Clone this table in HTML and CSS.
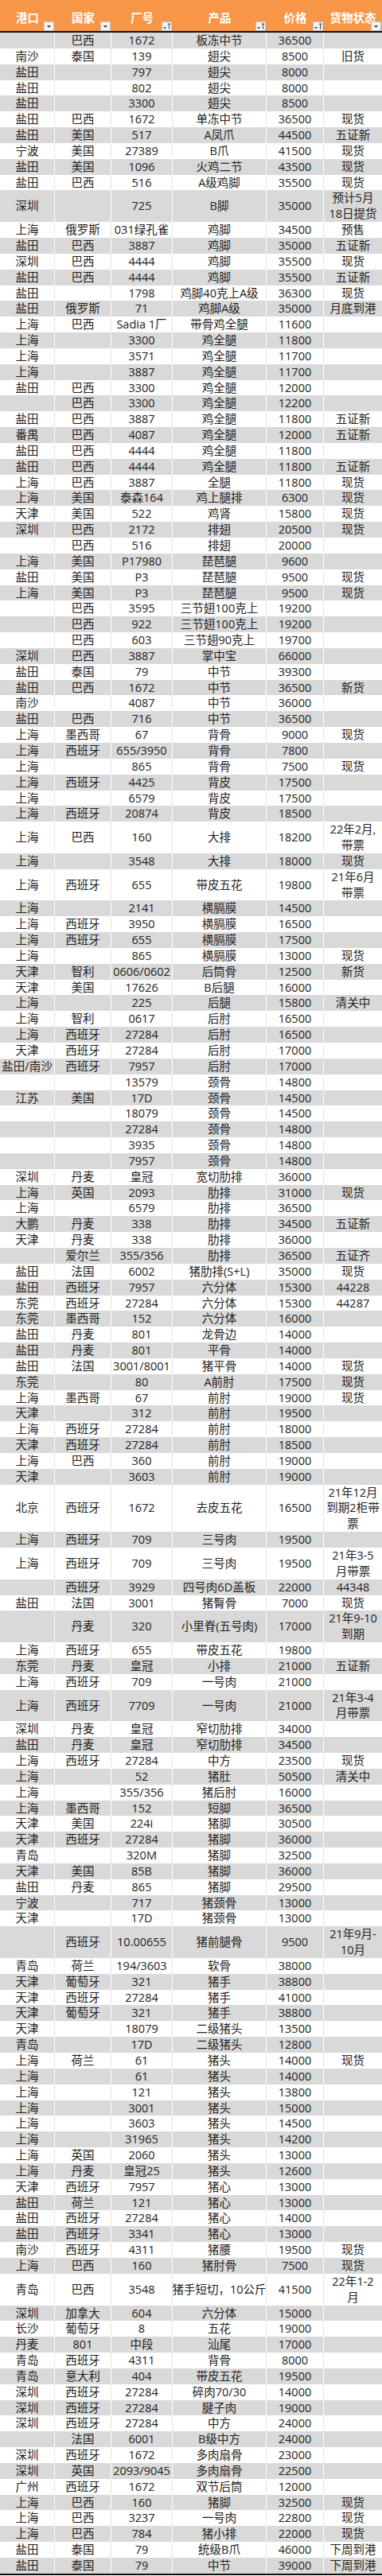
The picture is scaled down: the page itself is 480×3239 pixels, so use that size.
FILE: index.html
```html
<!DOCTYPE html>
<html lang="zh-CN">
<head>
<meta charset="utf-8">
<title>货物报价</title>
<link rel="stylesheet" href="styles.css">
</head>
<body>
<div class="sheet">
  <div class="hd">
    <div>港口<svg class="flt" viewBox="0 0 13 12"><rect x="0.5" y="0.5" width="12" height="11" fill="#f3f3f3" stroke="#c4c4c4"/><path d="M4 5h5l-2.5 3z" fill="#444"/></svg></div>
    <div>国家<svg class="flt" viewBox="0 0 13 12"><rect x="0.5" y="0.5" width="12" height="11" fill="#f3f3f3" stroke="#c4c4c4"/><path d="M4 5h5l-2.5 3z" fill="#444"/></svg></div>
    <div>厂号<svg class="flt" viewBox="0 0 13 12"><rect x="0.5" y="0.5" width="12" height="11" fill="#f3f3f3" stroke="#c4c4c4"/><path d="M2 7h4l-2 2.5z" fill="#444"/><path d="M9.5 2.2v7.6M8 3.8l1.5-1.6 1.5 1.6" stroke="#444" fill="none"/></svg></div>
    <div>产品<svg class="flt" viewBox="0 0 13 12"><rect x="0.5" y="0.5" width="12" height="11" fill="#f3f3f3" stroke="#c4c4c4"/><path d="M2 7h4l-2 2.5z" fill="#444"/><path d="M9.5 2.2v7.6M8 3.8l1.5-1.6 1.5 1.6" stroke="#444" fill="none"/></svg></div>
    <div>价格<svg class="flt" viewBox="0 0 13 12"><rect x="0.5" y="0.5" width="12" height="11" fill="#f3f3f3" stroke="#c4c4c4"/><path d="M2 7h4l-2 2.5z" fill="#444"/><path d="M9.5 2.2v7.6M8 3.8l1.5-1.6 1.5 1.6" stroke="#444" fill="none"/></svg></div>
    <div>货物状态<svg class="flt" viewBox="0 0 13 12"><rect x="0.5" y="0.5" width="12" height="11" fill="#f3f3f3" stroke="#c4c4c4"/><path d="M4 5h5l-2.5 3z" fill="#444"/></svg></div>
  </div>
  <div class="body">
<div class="r"><div></div><div>巴西</div><div>1672</div><div>板冻中节</div><div>36500</div><div></div></div>
<div class="r"><div>南沙</div><div>泰国</div><div>139</div><div>翅尖</div><div>8500</div><div>旧货</div></div>
<div class="r"><div>盐田</div><div></div><div>797</div><div>翅尖</div><div>8000</div><div></div></div>
<div class="r"><div>盐田</div><div></div><div>802</div><div>翅尖</div><div>8000</div><div></div></div>
<div class="r"><div>盐田</div><div></div><div>3300</div><div>翅尖</div><div>8500</div><div></div></div>
<div class="r"><div>盐田</div><div>巴西</div><div>1672</div><div>单冻中节</div><div>36500</div><div>现货</div></div>
<div class="r"><div>盐田</div><div>美国</div><div>517</div><div>A凤爪</div><div>44500</div><div>五证新</div></div>
<div class="r"><div>宁波</div><div>美国</div><div>27389</div><div>B爪</div><div>41500</div><div>现货</div></div>
<div class="r"><div>盐田</div><div>美国</div><div>1096</div><div>火鸡二节</div><div>43500</div><div>现货</div></div>
<div class="r"><div>盐田</div><div>巴西</div><div>516</div><div>A级鸡脚</div><div>35500</div><div>现货</div></div>
<div class="r"><div>深圳</div><div></div><div>725</div><div>B脚</div><div>35000</div><div><p class="ml">预计5月<br>18日提货</p></div></div>
<div class="r"><div>上海</div><div>俄罗斯</div><div>031绿孔雀</div><div>鸡脚</div><div>34500</div><div>预售</div></div>
<div class="r"><div>盐田</div><div>巴西</div><div>3887</div><div>鸡脚</div><div>35000</div><div>五证新</div></div>
<div class="r"><div>深圳</div><div>巴西</div><div>4444</div><div>鸡脚</div><div>35500</div><div>现货</div></div>
<div class="r"><div>盐田</div><div>巴西</div><div>4444</div><div>鸡脚</div><div>35500</div><div>五证新</div></div>
<div class="r"><div>盐田</div><div></div><div>1798</div><div>鸡脚40克上A级</div><div>36300</div><div>现货</div></div>
<div class="r"><div>盐田</div><div>俄罗斯</div><div>71</div><div>鸡脚A级</div><div>35000</div><div>月底到港</div></div>
<div class="r"><div>上海</div><div>巴西</div><div>Sadia 1厂</div><div>带骨鸡全腿</div><div>11600</div><div></div></div>
<div class="r"><div>上海</div><div></div><div>3300</div><div>鸡全腿</div><div>11800</div><div></div></div>
<div class="r"><div>上海</div><div></div><div>3571</div><div>鸡全腿</div><div>11700</div><div></div></div>
<div class="r"><div>上海</div><div></div><div>3887</div><div>鸡全腿</div><div>11700</div><div></div></div>
<div class="r"><div>盐田</div><div>巴西</div><div>3300</div><div>鸡全腿</div><div>12000</div><div></div></div>
<div class="r"><div></div><div>巴西</div><div>3300</div><div>鸡全腿</div><div>12200</div><div></div></div>
<div class="r"><div>盐田</div><div>巴西</div><div>3887</div><div>鸡全腿</div><div>11800</div><div>五证新</div></div>
<div class="r"><div>番禺</div><div>巴西</div><div>4087</div><div>鸡全腿</div><div>12000</div><div>五证新</div></div>
<div class="r"><div>盐田</div><div>巴西</div><div>4444</div><div>鸡全腿</div><div>11800</div><div></div></div>
<div class="r"><div>盐田</div><div>巴西</div><div>4444</div><div>鸡全腿</div><div>11800</div><div>五证新</div></div>
<div class="r"><div>上海</div><div>巴西</div><div>3887</div><div>全腿</div><div>11800</div><div>现货</div></div>
<div class="r"><div>上海</div><div>美国</div><div>泰森164</div><div>鸡上腿排</div><div>6300</div><div>现货</div></div>
<div class="r"><div>天津</div><div>美国</div><div>522</div><div>鸡肾</div><div>15800</div><div>现货</div></div>
<div class="r"><div>深圳</div><div>巴西</div><div>2172</div><div>排翅</div><div>20500</div><div>现货</div></div>
<div class="r"><div></div><div>巴西</div><div>516</div><div>排翅</div><div>20000</div><div></div></div>
<div class="r"><div>上海</div><div>美国</div><div>P17980</div><div>琵琶腿</div><div>9600</div><div></div></div>
<div class="r"><div>盐田</div><div>美国</div><div>P3</div><div>琵琶腿</div><div>9500</div><div>现货</div></div>
<div class="r"><div>上海</div><div>美国</div><div>P3</div><div>琵琶腿</div><div>9500</div><div>现货</div></div>
<div class="r"><div></div><div>巴西</div><div>3595</div><div>三节翅100克上</div><div>19200</div><div></div></div>
<div class="r"><div></div><div>巴西</div><div>922</div><div>三节翅100克上</div><div>19200</div><div></div></div>
<div class="r"><div></div><div>巴西</div><div>603</div><div>三节翅90克上</div><div>19700</div><div></div></div>
<div class="r"><div>深圳</div><div>巴西</div><div>3887</div><div>掌中宝</div><div>66000</div><div></div></div>
<div class="r"><div>盐田</div><div>泰国</div><div>79</div><div>中节</div><div>39300</div><div></div></div>
<div class="r"><div>盐田</div><div>巴西</div><div>1672</div><div>中节</div><div>36500</div><div>新货</div></div>
<div class="r"><div>南沙</div><div></div><div>4087</div><div>中节</div><div>36000</div><div></div></div>
<div class="r"><div>盐田</div><div>巴西</div><div>716</div><div>中节</div><div>36500</div><div></div></div>
<div class="r"><div>上海</div><div>墨西哥</div><div>67</div><div>背骨</div><div>9000</div><div>现货</div></div>
<div class="r"><div>上海</div><div>西班牙</div><div>655/3950</div><div>背骨</div><div>7800</div><div></div></div>
<div class="r"><div>上海</div><div></div><div>865</div><div>背骨</div><div>7500</div><div>现货</div></div>
<div class="r"><div>上海</div><div>西班牙</div><div>4425</div><div>背皮</div><div>17500</div><div></div></div>
<div class="r"><div>上海</div><div></div><div>6579</div><div>背皮</div><div>17500</div><div></div></div>
<div class="r"><div>上海</div><div>西班牙</div><div>20874</div><div>背皮</div><div>18500</div><div></div></div>
<div class="r"><div>上海</div><div>巴西</div><div>160</div><div>大排</div><div>18200</div><div><p class="ml">22年2月,<br>带票</p></div></div>
<div class="r"><div>上海</div><div></div><div>3548</div><div>大排</div><div>18000</div><div>现货</div></div>
<div class="r"><div>上海</div><div>西班牙</div><div>655</div><div>带皮五花</div><div>19800</div><div><p class="ml">21年6月<br>带票</p></div></div>
<div class="r"><div>上海</div><div></div><div>2141</div><div>横膈膜</div><div>14500</div><div></div></div>
<div class="r"><div>上海</div><div>西班牙</div><div>3950</div><div>横膈膜</div><div>16500</div><div></div></div>
<div class="r"><div>上海</div><div>西班牙</div><div>655</div><div>横膈膜</div><div>17500</div><div></div></div>
<div class="r"><div>上海</div><div></div><div>865</div><div>横膈膜</div><div>13000</div><div>现货</div></div>
<div class="r"><div>天津</div><div>智利</div><div>0606/0602</div><div>后筒骨</div><div>12500</div><div>新货</div></div>
<div class="r"><div>天津</div><div>美国</div><div>17626</div><div>B后腿</div><div>16000</div><div></div></div>
<div class="r"><div>上海</div><div></div><div>225</div><div>后腿</div><div>15800</div><div>清关中</div></div>
<div class="r"><div>上海</div><div>智利</div><div>0617</div><div>后肘</div><div>16500</div><div></div></div>
<div class="r"><div>上海</div><div>西班牙</div><div>27284</div><div>后肘</div><div>16500</div><div></div></div>
<div class="r"><div>天津</div><div>西班牙</div><div>27284</div><div>后肘</div><div>17000</div><div></div></div>
<div class="r"><div>盐田/南沙</div><div>西班牙</div><div>7957</div><div>后肘</div><div>17000</div><div></div></div>
<div class="r"><div></div><div></div><div>13579</div><div>颈骨</div><div>14800</div><div></div></div>
<div class="r"><div>江苏</div><div>美国</div><div>17D</div><div>颈骨</div><div>14500</div><div></div></div>
<div class="r"><div></div><div></div><div>18079</div><div>颈骨</div><div>14500</div><div></div></div>
<div class="r"><div></div><div></div><div>27284</div><div>颈骨</div><div>14800</div><div></div></div>
<div class="r"><div></div><div></div><div>3935</div><div>颈骨</div><div>14800</div><div></div></div>
<div class="r"><div></div><div></div><div>7957</div><div>颈骨</div><div>14800</div><div></div></div>
<div class="r"><div>深圳</div><div>丹麦</div><div>皇冠</div><div>宽切肋排</div><div>36000</div><div></div></div>
<div class="r"><div>上海</div><div>英国</div><div>2093</div><div>肋排</div><div>31000</div><div>现货</div></div>
<div class="r"><div>上海</div><div></div><div>6579</div><div>肋排</div><div>36500</div><div></div></div>
<div class="r"><div>大鹏</div><div>丹麦</div><div>338</div><div>肋排</div><div>34500</div><div>五证新</div></div>
<div class="r"><div>天津</div><div>丹麦</div><div>338</div><div>肋排</div><div>36000</div><div></div></div>
<div class="r"><div></div><div>爱尔兰</div><div>355/356</div><div>肋排</div><div>36500</div><div>五证齐</div></div>
<div class="r"><div>盐田</div><div>法国</div><div>6002</div><div>猪肋排(S+L)</div><div>35000</div><div>现货</div></div>
<div class="r"><div>盐田</div><div>西班牙</div><div>7957</div><div>六分体</div><div>15300</div><div>44228</div></div>
<div class="r"><div>东莞</div><div>西班牙</div><div>27284</div><div>六分体</div><div>15300</div><div>44287</div></div>
<div class="r"><div>东莞</div><div>墨西哥</div><div>152</div><div>六分体</div><div>16000</div><div></div></div>
<div class="r"><div>盐田</div><div>丹麦</div><div>801</div><div>龙骨边</div><div>14000</div><div></div></div>
<div class="r"><div>盐田</div><div>丹麦</div><div>801</div><div>平骨</div><div>14000</div><div></div></div>
<div class="r"><div>盐田</div><div>法国</div><div>3001/8001</div><div>猪平骨</div><div>14000</div><div>现货</div></div>
<div class="r"><div>东莞</div><div></div><div>80</div><div>A前肘</div><div>17500</div><div>现货</div></div>
<div class="r"><div>上海</div><div>墨西哥</div><div>67</div><div>前肘</div><div>19000</div><div>现货</div></div>
<div class="r"><div>天津</div><div></div><div>312</div><div>前肘</div><div>19500</div><div></div></div>
<div class="r"><div>上海</div><div>西班牙</div><div>27284</div><div>前肘</div><div>18000</div><div></div></div>
<div class="r"><div>天津</div><div>西班牙</div><div>27284</div><div>前肘</div><div>18500</div><div></div></div>
<div class="r"><div>上海</div><div>巴西</div><div>360</div><div>前肘</div><div>19000</div><div></div></div>
<div class="r"><div>天津</div><div></div><div>3603</div><div>前肘</div><div>19000</div><div></div></div>
<div class="r"><div>北京</div><div>西班牙</div><div>1672</div><div>去皮五花</div><div>16500</div><div><p class="ml">21年12月<br>到期2柜带<br>票</p></div></div>
<div class="r"><div>上海</div><div>西班牙</div><div>709</div><div>三号肉</div><div>19500</div><div></div></div>
<div class="r"><div>上海</div><div>西班牙</div><div>709</div><div>三号肉</div><div>19500</div><div><p class="ml">21年3-5<br>月带票</p></div></div>
<div class="r"><div></div><div>西班牙</div><div>3929</div><div>四号肉6D盖板</div><div>22000</div><div>44348</div></div>
<div class="r"><div>盐田</div><div>法国</div><div>3001</div><div>猪臀骨</div><div>7000</div><div>现货</div></div>
<div class="r"><div></div><div>丹麦</div><div>320</div><div>小里脊(五号肉)</div><div>17000</div><div><p class="ml">21年9-10<br>到期</p></div></div>
<div class="r"><div>上海</div><div>西班牙</div><div>655</div><div>带皮五花</div><div>19800</div><div></div></div>
<div class="r"><div>东莞</div><div>丹麦</div><div>皇冠</div><div>小排</div><div>21000</div><div>五证新</div></div>
<div class="r"><div>上海</div><div>西班牙</div><div>709</div><div>一号肉</div><div>21000</div><div></div></div>
<div class="r"><div>上海</div><div>西班牙</div><div>7709</div><div>一号肉</div><div>21000</div><div><p class="ml">21年3-4<br>月带票</p></div></div>
<div class="r"><div>深圳</div><div>丹麦</div><div>皇冠</div><div>窄切肋排</div><div>34000</div><div></div></div>
<div class="r"><div>盐田</div><div>丹麦</div><div>皇冠</div><div>窄切肋排</div><div>34500</div><div></div></div>
<div class="r"><div>上海</div><div>西班牙</div><div>27284</div><div>中方</div><div>23500</div><div>现货</div></div>
<div class="r"><div>上海</div><div></div><div>52</div><div>猪肚</div><div>50500</div><div>清关中</div></div>
<div class="r"><div>上海</div><div></div><div>355/356</div><div>猪后肘</div><div>16000</div><div></div></div>
<div class="r"><div>上海</div><div>墨西哥</div><div>152</div><div>短脚</div><div>36500</div><div></div></div>
<div class="r"><div>天津</div><div>美国</div><div>224i</div><div>猪脚</div><div>30500</div><div></div></div>
<div class="r"><div>天津</div><div>西班牙</div><div>27284</div><div>猪脚</div><div>36000</div><div></div></div>
<div class="r"><div>青岛</div><div></div><div>320M</div><div>猪脚</div><div>32500</div><div></div></div>
<div class="r"><div>天津</div><div>美国</div><div>85B</div><div>猪脚</div><div>36000</div><div></div></div>
<div class="r"><div>盐田</div><div>丹麦</div><div>865</div><div>猪脚</div><div>29500</div><div></div></div>
<div class="r"><div>宁波</div><div></div><div>717</div><div>猪颈骨</div><div>13000</div><div></div></div>
<div class="r"><div>天津</div><div></div><div>17D</div><div>猪颈骨</div><div>13000</div><div></div></div>
<div class="r"><div></div><div>西班牙</div><div>10.00655</div><div>猪前腿骨</div><div>9500</div><div><p class="ml">21年9月-<br>10月</p></div></div>
<div class="r"><div>青岛</div><div>荷兰</div><div>194/3603</div><div>软骨</div><div>38000</div><div></div></div>
<div class="r"><div>天津</div><div>葡萄牙</div><div>321</div><div>猪手</div><div>38800</div><div></div></div>
<div class="r"><div>天津</div><div>西班牙</div><div>27284</div><div>猪手</div><div>41000</div><div></div></div>
<div class="r"><div>天津</div><div>葡萄牙</div><div>321</div><div>猪手</div><div>38800</div><div></div></div>
<div class="r"><div>天津</div><div></div><div>18079</div><div>二级猪头</div><div>13500</div><div></div></div>
<div class="r"><div>青岛</div><div></div><div>17D</div><div>二级猪头</div><div>12800</div><div></div></div>
<div class="r"><div>上海</div><div>荷兰</div><div>61</div><div>猪头</div><div>14000</div><div>现货</div></div>
<div class="r"><div>上海</div><div></div><div>61</div><div>猪头</div><div>14000</div><div></div></div>
<div class="r"><div>上海</div><div></div><div>121</div><div>猪头</div><div>13800</div><div></div></div>
<div class="r"><div>上海</div><div></div><div>3001</div><div>猪头</div><div>15000</div><div></div></div>
<div class="r"><div>上海</div><div></div><div>3603</div><div>猪头</div><div>14500</div><div></div></div>
<div class="r"><div>上海</div><div></div><div>31965</div><div>猪头</div><div>14200</div><div></div></div>
<div class="r"><div>上海</div><div>英国</div><div>2060</div><div>猪头</div><div>13000</div><div></div></div>
<div class="r"><div>上海</div><div>丹麦</div><div>皇冠25</div><div>猪头</div><div>12600</div><div></div></div>
<div class="r"><div>天津</div><div>西班牙</div><div>7957</div><div>猪心</div><div>13000</div><div></div></div>
<div class="r"><div>盐田</div><div>荷兰</div><div>121</div><div>猪心</div><div>13000</div><div></div></div>
<div class="r"><div>盐田</div><div>西班牙</div><div>27284</div><div>猪心</div><div>14000</div><div></div></div>
<div class="r"><div>盐田</div><div>西班牙</div><div>3341</div><div>猪心</div><div>13000</div><div></div></div>
<div class="r"><div>南沙</div><div>西班牙</div><div>4311</div><div>猪腰</div><div>19500</div><div>现货</div></div>
<div class="r"><div>上海</div><div>巴西</div><div>160</div><div>猪肘骨</div><div>7500</div><div>现货</div></div>
<div class="r"><div>青岛</div><div>巴西</div><div>3548</div><div>猪手短切，10公斤</div><div>41500</div><div><p class="ml">22年1-2<br>月</p></div></div>
<div class="r"><div>深圳</div><div>加拿大</div><div>604</div><div>六分体</div><div>15000</div><div></div></div>
<div class="r"><div>长沙</div><div>葡萄牙</div><div>8</div><div>五花</div><div>19000</div><div></div></div>
<div class="r"><div>丹麦</div><div>801</div><div>中段</div><div>汕尾</div><div>17000</div><div></div></div>
<div class="r"><div>青岛</div><div>西班牙</div><div>4311</div><div>背骨</div><div>8000</div><div></div></div>
<div class="r"><div>青岛</div><div>意大利</div><div>404</div><div>带皮五花</div><div>19500</div><div></div></div>
<div class="r"><div>深圳</div><div>西班牙</div><div>27284</div><div>碎肉70/30</div><div>14000</div><div></div></div>
<div class="r"><div>深圳</div><div>西班牙</div><div>27284</div><div>腱子肉</div><div>19000</div><div></div></div>
<div class="r"><div>深圳</div><div>西班牙</div><div>27284</div><div>中方</div><div>24000</div><div></div></div>
<div class="r"><div></div><div>法国</div><div>6001</div><div>B级中方</div><div>24000</div><div></div></div>
<div class="r"><div>深圳</div><div>西班牙</div><div>1672</div><div>多肉扇骨</div><div>23000</div><div></div></div>
<div class="r"><div>深圳</div><div>英国</div><div>2093/9045</div><div>多肉扇骨</div><div>22500</div><div></div></div>
<div class="r"><div>广州</div><div>西班牙</div><div>1672</div><div>双节后筒</div><div>12000</div><div></div></div>
<div class="r"><div>上海</div><div>巴西</div><div>160</div><div>猪脚</div><div>32500</div><div>现货</div></div>
<div class="r"><div>上海</div><div>巴西</div><div>3237</div><div>一号肉</div><div>22800</div><div>现货</div></div>
<div class="r"><div>上海</div><div>巴西</div><div>784</div><div>猪小排</div><div>22000</div><div>现货</div></div>
<div class="r"><div>盐田</div><div>泰国</div><div>79</div><div>统级B爪</div><div>46000</div><div>下周到港</div></div>
<div class="r"><div>盐田</div><div>泰国</div><div>79</div><div>中节</div><div>39000</div><div>下周到港</div></div>
  </div>
</div>
</body>
</html>
```
FILE: styles.css
```css
html, body {
  margin: 0;
  padding: 0;
  background: #ffffff;
}

.sheet {
  width: 480px;
  font-family: "Open Sans", "Noto Sans CJK SC", sans-serif;
  font-size: 14.5px;
  color: #222222;
  border-bottom: 2px solid #111111;
}

.hd {
  display: grid;
  grid-template-columns: 69px 71px 77px 118px 72px 73px;
  height: 39px;
  background: #f79646;
  border-bottom: 2px solid #111111;
}

.hd > div {
  position: relative;
  display: flex;
  align-items: center;
  justify-content: center;
  padding-top: 3px;
  color: #ffffff;
  font-weight: bold;
  font-family: "Noto Sans CJK SC", sans-serif;
  white-space: nowrap;
}

.flt {
  position: absolute;
  right: 1px;
  bottom: 0;
  width: 13px;
  height: 12px;
}

.r {
  display: grid;
  grid-template-columns: 69px 71px 77px 118px 72px 73px;
}

.r:nth-child(odd) {
  background: #d9d9d9;
}

.r > div {
  display: flex;
  align-items: center;
  justify-content: center;
  min-height: 19.85px;
  line-height: 19.85px;
  white-space: nowrap;
  text-align: center;
  border-right: 1px solid #e4e4e4;
}

.r:nth-child(odd) > div {
  border-right-color: #ffffff;
}

.r > div:last-child {
  border-right: 0;
}

.ml {
  margin: 0;
  line-height: 19.85px;
  text-align: center;
}
```
